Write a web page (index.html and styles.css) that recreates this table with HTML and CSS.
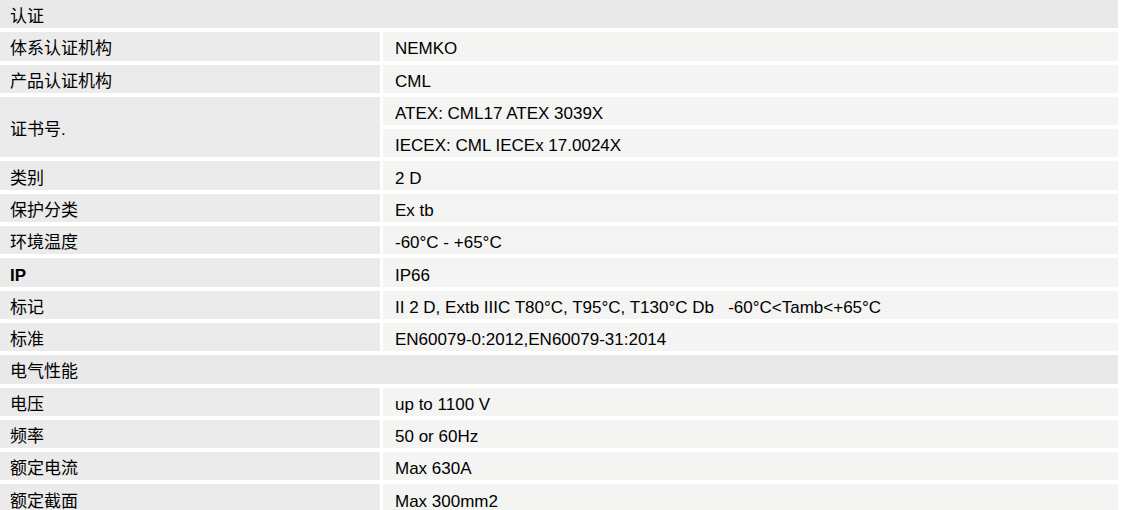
FILE: index.html
```html
<!DOCTYPE html>
<html lang="zh-CN">

<head>
    <meta charset="UTF-8">
    <meta name="viewport" content="width=device-width, initial-scale=1.0">
    <title>产品参数</title>
    <link rel="stylesheet" href="styles.css">
</head>

<body>
    <table class="spec-table">
        <colgroup>
            <col class="label-col">
            <col>
        </colgroup>
        <tr class="section-row">
            <td colspan="2">认证</td>
        </tr>
        <tr>
            <td class="spec-label">体系认证机构</td>
            <td class="spec-value">NEMKO</td>
        </tr>
        <tr>
            <td class="spec-label">产品认证机构</td>
            <td class="spec-value">CML</td>
        </tr>
        <tr>
            <td class="spec-label" rowspan="2">证书号.</td>
            <td class="spec-value">ATEX: CML17 ATEX 3039X</td>
        </tr>
        <tr>
            <td class="spec-value">IECEX: CML IECEx 17.0024X</td>
        </tr>
        <tr>
            <td class="spec-label">类别</td>
            <td class="spec-value">2 D</td>
        </tr>
        <tr>
            <td class="spec-label">保护分类</td>
            <td class="spec-value">Ex tb</td>
        </tr>
        <tr>
            <td class="spec-label">环境温度</td>
            <td class="spec-value">-60°C - +65°C</td>
        </tr>
        <tr>
            <td class="spec-label"><strong>IP</strong></td>
            <td class="spec-value">IP66</td>
        </tr>
        <tr>
            <td class="spec-label">标记</td>
            <td class="spec-value">II 2 D, Extb IIIC T80°C, T95°C, T130°C Db &nbsp;&nbsp;-60°C&lt;Tamb&lt;+65°C</td>
        </tr>
        <tr>
            <td class="spec-label">标准</td>
            <td class="spec-value">EN60079-0:2012,EN60079-31:2014</td>
        </tr>
        <tr class="section-row">
            <td colspan="2">电气性能</td>
        </tr>
        <tr>
            <td class="spec-label">电压</td>
            <td class="spec-value">up to 1100 V</td>
        </tr>
        <tr>
            <td class="spec-label">频率</td>
            <td class="spec-value">50 or 60Hz</td>
        </tr>
        <tr>
            <td class="spec-label">额定电流</td>
            <td class="spec-value">Max 630A</td>
        </tr>
        <tr>
            <td class="spec-label">额定截面</td>
            <td class="spec-value">Max 300mm2</td>
        </tr>
    </table>
</body>

</html>
```

FILE: styles.css
```css
/* Basic reset */
* {
    margin: 0;
    padding: 0;
    box-sizing: border-box;
}

body {
    font-family: 'Liberation Sans', 'Noto Sans CJK SC', sans-serif;
    background-color: #ffffff;
    color: #000000;
    font-size: 17px;
    overflow: hidden;
}

.spec-table {
    width: calc(100% + 3px);
    margin: -4px 0 0 -3px;
    border-collapse: separate;
    border-spacing: 3px 4px;
    table-layout: fixed;
}

.label-col {
    width: 380px;
}

.spec-table td {
    height: 28.3px;
    line-height: 20px;
    vertical-align: middle;
    white-space: nowrap;
}

.section-row td {
    background-color: #e9e9e9;
    padding: 6px 10px 0;
}

.spec-label {
    background-color: #ebebeb;
    padding: 6px 10px 0;
}

.spec-label strong {
    font-weight: 700;
}

.spec-value {
    background-color: #f4f4f2;
    padding: 6px 12px 0;
}
```
